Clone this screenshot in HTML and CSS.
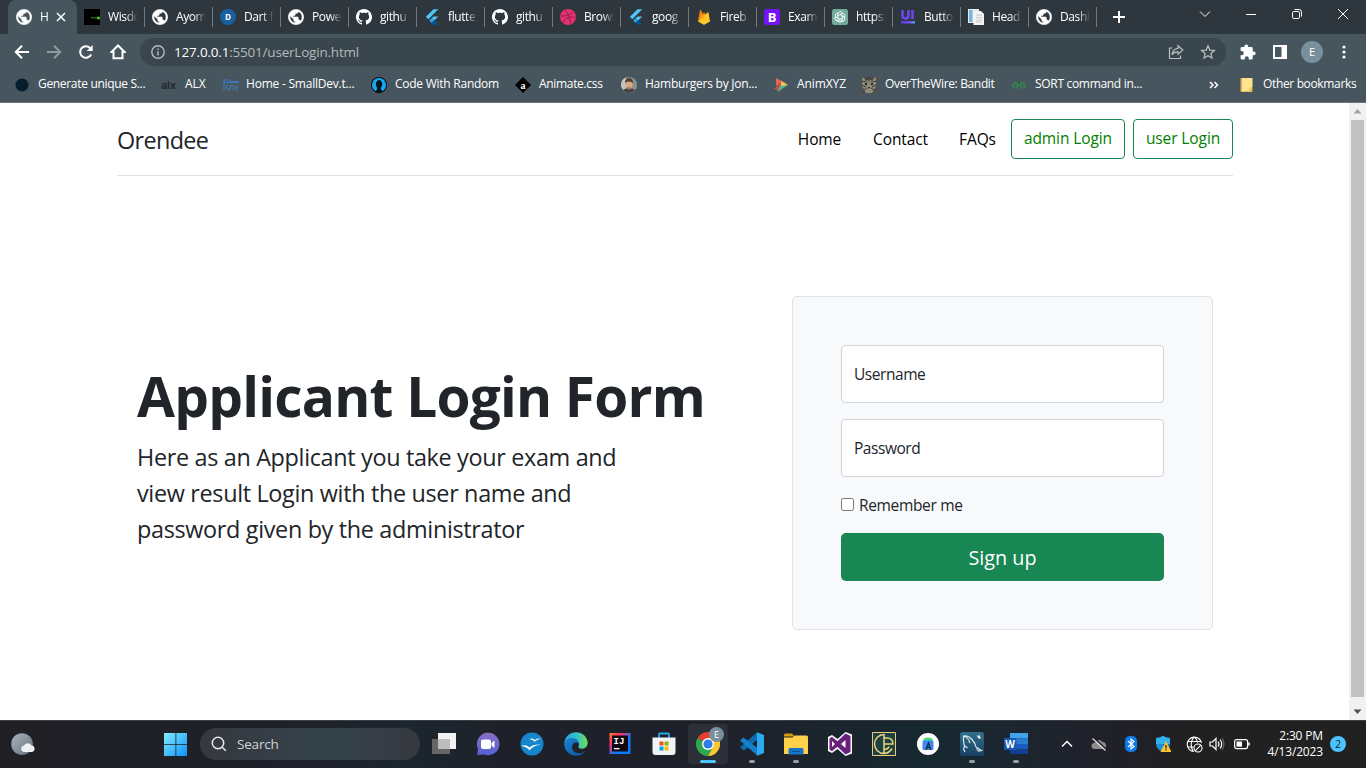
FILE: index.html
```html
<!DOCTYPE html>
<html lang="en">
<head>
<meta charset="utf-8">
<title>Applicant Login</title>
<link rel="stylesheet" href="styles.css">
</head>
<body>
<svg class="defs" width="0" height="0">
  <symbol id="globe" viewBox="1.500 1.500 21 21"><path fill="#fff" stroke="#fff" stroke-width=".8" d="M12 2C6.480 2 2 6.480 2 12s4.480 10 10 10 10-4.480 10-10S17.520 2 12 2zm-1 17.930c-3.950-.49-7-3.850-7-7.930 0-.62.08-1.210.21-1.790L9 15v1c0 1.100.9 2 2 2v1.930zm6.900-2.540c-.26-.81-1-1.390-1.900-1.390h-1v-3c0-.55-.45-1-1-1H8v-2h2c.55 0 1-.45 1-1V7h2c1.100 0 2-.9 2-2v-.41c2.930 1.190 5 4.060 5 7.410 0 2.080-.8 3.970-2.100 5.390z"/></symbol>
  <symbol id="github" viewBox="0 0 16 16"><path fill="#fff" d="M8 0C3.580 0 0 3.580 0 8c0 3.540 2.290 6.530 5.470 7.590.4.070.55-.17.55-.38 0-.19-.01-.82-.01-1.490-2.010.37-2.530-.49-2.690-.94-.09-.23-.48-.94-.82-1.130-.28-.15-.68-.52-.01-.53.63-.01 1.080.58 1.230.82.72 1.210 1.870.87 2.330.66.070-.52.28-.87.51-1.070-1.780-.2-3.640-.89-3.640-3.950 0-.87.31-1.590.82-2.150-.08-.2-.36-1.020.08-2.120 0 0 .67-.21 2.200.82.64-.18 1.320-.27 2-.27s1.360.09 2 .27c1.530-1.040 2.200-.82 2.200-.82.44 1.100.16 1.920.08 2.120.51.56.82 1.270.82 2.150 0 3.070-1.870 3.750-3.650 3.950.29.25.54.73.54 1.480 0 1.070-.01 1.930-.01 2.200 0 .21.15.46.55.38A8 8 0 0 0 8 0z"/></symbol>
  <symbol id="flutter" viewBox="0 0 16 16"><path fill="#54c5f8" d="M9.500.3h4.800L4.300 10.200 1.900 7.800z"/><path fill="#54c5f8" d="M9.500 7.500h4.800L10.200 11.500 7.700 9.200z"/><path fill="#29a0e8" d="M5.200 11.500l2.500-2.400 2.500 2.400-2.500 2.500z"/><path fill="#01579b" d="M7.700 14l2.500-2.500 4.100 4.200H9.500z"/></symbol>
</svg>

<div class="screen">
  <header class="tabs">
    <div class="tab active"><svg class="ico"><use href="#globe"/></svg><span class="t">H</span><svg class="x" viewBox="0 0 10 10"><path d="M1 1l8 8M9 1l-8 8"/></svg></div>
    <div class="tab"><svg class="ico" viewBox="0 0 16 16"><path d="M0 0h16v16H0z"/><path d="M7 8.500l3 .5 6-.5" stroke="#3a8a20" stroke-width="1.200" fill="none"/><circle cx="14.500" cy="9" r="1.500" fill="#4fd02c"/></svg><span class="t">Wisdo</span></div>
    <div class="tab"><svg class="ico"><use href="#globe"/></svg><span class="t">Ayom</span></div>
    <div class="tab"><svg class="ico" viewBox="0 0 16 16"><circle cx="8" cy="8" r="8" fill="#1a5f9e"/><text x="8" y="11" text-anchor="middle" class="d">D</text></svg><span class="t">Dart f</span></div>
    <div class="tab"><svg class="ico"><use href="#globe"/></svg><span class="t">Powe</span></div>
    <div class="tab"><svg class="ico"><use href="#github"/></svg><span class="t">githu</span></div>
    <div class="tab"><svg class="ico"><use href="#flutter"/></svg><span class="t">flutte</span></div>
    <div class="tab"><svg class="ico"><use href="#github"/></svg><span class="t">githu</span></div>
    <div class="tab"><svg class="ico" viewBox="0 0 16 16"><circle cx="8" cy="8" r="8" fill="#e2326f"/><g fill="none" stroke="#94204b" stroke-width="1"><path d="M5 1c3 4 5 8 5.800 13.800M.6 7c5 .3 9-.8 12.200-4M3 13.800C5 9 9.500 7 15.400 8.500"/></g></svg><span class="t">Brows</span></div>
    <div class="tab"><svg class="ico"><use href="#flutter"/></svg><span class="t">goog</span></div>
    <div class="tab"><svg class="ico" viewBox="0 0 16 16"><path fill="#f5820d" d="M2 12L4 1.200c.1-.5.7-.6.9-.1L7 5l1-2 6 9z"/><path fill="#ffca28" d="M2 12.500l9.500-9c.4-.4.900-.2 1 .3L14 12.500l-5.300 3c-.5.300-1 .3-1.400 0z"/><path fill="#ffa712" d="M2 12.500L7 4.800l2 3.500z"/></svg><span class="t">Fireb</span></div>
    <div class="tab"><svg class="ico" viewBox="0 0 16 16"><rect width="16" height="16" rx="2.500" fill="#7413f5"/><text x="8" y="12.600" text-anchor="middle" class="b">B</text></svg><span class="t">Exam</span></div>
    <div class="tab"><svg class="ico" viewBox="0 0 16 16"><rect width="16" height="16" rx="2.500" fill="#74aa9c"/><g fill="none" stroke="#fff" stroke-width=".9"><g id="lp"><path d="M5.800 9.300V5.200c0-3 4.300-3.300 4.800-.8M5.800 6.800l3.400-2c2.500-1.200 4.700 1.600 3 3.600"/></g><use href="#lp" transform="rotate(120 8 8)"/><use href="#lp" transform="rotate(240 8 8)"/></g></svg><span class="t">https:</span></div>
    <div class="tab"><svg class="ico" viewBox="0 0 16 16"><defs><linearGradient id="ui"><stop stop-color="#5a3df5"/><stop offset=".6" stop-color="#7a4df8"/><stop offset="1" stop-color="#38b6ff"/></linearGradient></defs><path d="M2.500 1v5.500q0 3 3 3t3-3V1M12.500 1v9" fill="none" stroke="#6f45f2" stroke-width="2.600"/><path d="M1 12.200h14v2.300H1z" fill="url(#ui)"/></svg><span class="t">Butto</span></div>
    <div class="tab"><svg class="ico" viewBox="0 0 16 16"><path d="M0 0h11v14H0z" fill="#e3edf5"/><path d="M1 1h3.500v12H1z" fill="#78b4df"/><path d="M5.500 2H13l3 3v11H5.500z" fill="#f4f4f4"/><path d="M8 6h6M8 8.500h6M8 11h6M8 13h6" stroke="#b9bcc0" stroke-width=".8"/></svg><span class="t">Head</span></div>
    <div class="tab"><svg class="ico"><use href="#globe"/></svg><span class="t">Dashl</span></div>
    <svg class="plus" viewBox="0 0 12 12"><path d="M6 0v12M0 6h12"/></svg>
    <div class="winbtns">
      <svg viewBox="0 0 12 12"><path d="M1 3.500l5 5 5-5"/></svg>
      <svg viewBox="0 0 12 12"><path d="M1 6.500h10"/></svg>
      <svg viewBox="0 0 12 12"><rect x="1.500" y="3.500" width="7" height="7" rx="1.300"/><path d="M3.500 1.500h4.500q2.500 0 2.500 2.500v4.500"/></svg>
      <svg viewBox="0 0 12 12"><path d="M1 1l10 10M11 1L1 11"/></svg>
    </div>
  </header>

  <div class="toolbar">
    <div class="nav"><svg viewBox="0 0 16 16"><path d="M15 8H2M8 1.800L1.800 8 8 14.200"/></svg></div>
    <div class="nav dim"><svg viewBox="0 0 16 16"><path d="M1 8h13M8 1.800L14.200 8 8 14.200"/></svg></div>
    <div class="nav"><svg viewBox="0 0 16 16"><path d="M13.200 10.500A5.800 5.800 0 1 1 12.500 4.300"/><path class="f" d="M14.700 1v6h-6z"/></svg></div>
    <div class="nav"><svg viewBox="0 0 16 16"><path d="M8 1.500L1.500 8H3.500v6.300h9V8h2z"/></svg></div>
    <div class="omni">
      <svg class="info" viewBox="0 0 14 14"><circle cx="7" cy="7" r="6.200"/><path d="M7 6.200v4.300M7 3.500v1.500"/></svg>
      <span class="url"><b>127.0.0.1</b>:5501/userLogin.html</span>
      <svg class="oi" viewBox="0 0 16 16"><path d="M4.500 4H1.500v10.500h11v-3M10 1.800l4.800 4.200L10 10.200V7.800q-4-.2-6 3 .5-5.800 6-6.500z"/></svg>
      <svg class="oi" viewBox="0 0 16 16"><path d="M8 1.800l1.800 4.300 4.600.4-3.500 3 1.100 4.600L8 11.700l-4 2.400 1.100-4.600-3.500-3 4.600-.4z"/></svg>
    </div>
    <div class="ext">
      <svg viewBox="0 0 16 16"><path fill="#fff" d="M13.800 7.500h-1.100V4.300c0-.8-.6-1.400-1.400-1.400H8.200V2.400a1.900 1.900 0 0 0-3.800 0v.5H1.900C1.100 2.900.6 3.500.6 4.300v2.800h1.100a2 2 0 0 1 0 4.100H.6V14c0 .8.600 1.400 1.300 1.400h2.900v-1.100a2 2 0 0 1 4 0v1.100h2.500c.8 0 1.400-.6 1.400-1.400v-2.800h1.100a1.850 1.850 0 0 0 0-3.700z"/></svg>
      <svg viewBox="0 0 16 16"><path fill="none" stroke="#fff" stroke-width="2" d="M2 2h12v12H2z"/><path fill="#fff" d="M9.500 1H15v14H9.500z"/></svg>
      <span class="avatar">E</span>
      <svg viewBox="0 0 16 16"><g fill="#fff"><circle cx="8" cy="3" r="1.600"/><circle cx="8" cy="8" r="1.600"/><circle cx="8" cy="13" r="1.600"/></g></svg>
    </div>
  </div>

  <div class="bookmarks">
    <div class="bm"><svg class="ico" viewBox="0 0 16 16"><circle cx="8" cy="8" r="6.500" fill="#051d2d"/></svg><span class="m1">Generate unique S...</span></div>
    <div class="bm"><svg class="ico" viewBox="0 0 16 16"><text x="0" y="11.500" class="alx" textLength="15" lengthAdjust="spacingAndGlyphs">alx</text></svg><span class="m2">ALX</span></div>
    <div class="bm"><svg class="ico" viewBox="0 0 16 16"><path d="M1 14V3h5l1.500 1.500H15v2M1 5.500h14M13.500 8v6" stroke="#3c78bd" fill="none" stroke-width="1.200"/><path d="M5 8L2.800 10.500 5 13M9.500 8l2.200 2.500L9.500 13M8 7.500l-1.500 6" stroke="#4a8cd6" fill="none"/></svg><span class="m3">Home - SmallDev.t...</span></div>
    <div class="bm"><svg class="ico" viewBox="0 0 16 16"><circle cx="8" cy="8" r="8" fill="#0b1115"/><circle cx="8" cy="8" r="7" fill="#12a9f5"/><path d="M3.800 14.500q3-1.500 2.200-4Q4.500 8.500 5 5.500 6 3 8.200 3t3 3q.3 3-1.200 4.500-.6 2.500 2 4Q8 17 3.800 14.500z" fill="#071219"/></svg><span class="m4">Code With Random</span></div>
    <div class="bm"><svg class="ico" viewBox="0 0 16 16"><path d="M8 0l8 8-8 8-8-8z"/><text x="8" y="11.500" text-anchor="middle" class="a">a</text></svg><span class="m5">Animate.css</span></div>
    <div class="bm"><svg class="ico" viewBox="0 0 16 16"><circle cx="8" cy="8" r="8" fill="#8c938a"/><path d="M0 8a8 8 0 0 1 5-7.500V14Q0 12 0 8z" fill="#c1c5bd"/><path d="M2 13q6-4 12 0-6 6-12 0z" fill="#413f42"/><ellipse cx="8" cy="7.500" rx="3.500" ry="4.800" fill="#d8a88b"/><path d="M4 6q0-5 4-5t4 5q-4-3-8 0z" fill="#574033"/><path d="M6 10q2 1 4 0l-2 4z" fill="#a96555"/></svg><span class="m6">Hamburgers by Jon...</span></div>
    <div class="bm"><svg class="ico" viewBox="0 0 16 16"><path d="M3 1l10 5-5 4-5-2z" fill="#e26852"/><path d="M8 4l7 4-8 4z" fill="#f1c65b"/><path d="M1 12l7-8v10z" fill="#be4f57"/><path d="M4 15l3-6 8-1z" fill="#54b783"/></svg><span class="m7">AnimXYZ</span></div>
    <div class="bm"><svg class="ico" viewBox="0 0 16 16"><path d="M0 0h16v16H0z" fill="#514f47"/><path d="M1 0l4 3h6l4-3v9l-4 7H5L1 9z" fill="#8f8c7f"/><path d="M5 1v4M8 0v5M11 1v4M1 8l4 2M15 8l-4 2M3 13l3-2M13 13l-3-2M1 4l3 1M15 4l-3 1" stroke="#39372f"/><circle cx="5" cy="7" r="1.200" fill="#24231c"/><circle cx="11" cy="7" r="1.200" fill="#24231c"/><path d="M6.500 10h3L8 12z" fill="#403b36"/></svg><span class="m8">OverTheWire: Bandit</span></div>
    <div class="bm"><svg class="ico" viewBox="0 0 16 16"><path d="M1 8h14M2 6q4.500-2 4.800 2Q6.500 11.500 4 11 1.500 10.500 1.200 8M14 6q-4.500-2-4.800 2 .3 3.500 2.800 3 2.500-.5 2.800-3" stroke="#2f8d46" fill="none" stroke-width="1.200"/></svg><span class="m9">SORT command in...</span></div>
    <div class="bmr"><svg class="more" viewBox="0 0 10 8"><path d="M1 1l3 3-3 3M5.500 1l3 3-3 3"/></svg><i class="sep"></i><svg class="ico" viewBox="0 0 16 16"><path d="M2.500 1h11v9l-2 4.500h-9z" fill="#ffe38e"/><path d="M2 1v13.500h11V11h-2.500v3" fill="none" stroke="#eec048" stroke-width="1"/></svg><span class="m10">Other bookmarks</span></div>
  </div>

  <div class="view">
    <main class="page">
      <nav class="head">
        <span class="brand">Orendee</span>
        <a class="l1">Home</a><a class="l2">Contact</a><a class="l3">FAQs</a>
        <a class="btn b1">admin Login</a><a class="btn b2">user Login</a>
      </nav>
      <section class="hero">
        <div class="copy">
          <h1>Applicant Login Form</h1>
          <p>Here as an Applicant you take your exam and<br>view result Login with the user name and<br>password given by the administrator</p>
        </div>
        <form class="card">
          <div class="field">Username</div>
          <div class="field">Password</div>
          <label class="remember"><input type="checkbox"><span>Remember me</span></label>
          <button type="button">Sign up</button>
        </form>
      </section>
    </main>
    <div class="scroll"><svg viewBox="0 0 17 17"><path d="M4.500 10.500l4-4.500 4 4.500z" fill="#a3a3a3"/></svg><i></i><svg viewBox="0 0 17 17"><path d="M4.500 6.500l4 4.500 4-4.500z" fill="#505050"/></svg></div>
  </div>

  <footer class="task">
    <svg class="weather" viewBox="0 0 24 24"><defs><linearGradient id="mo" x2="1" y2="1"><stop stop-color="#a9b3bd"/><stop offset="1" stop-color="#68727c"/></linearGradient></defs><circle cx="11" cy="12" r="10.800" fill="url(#mo)"/><path d="M13 20a3.300 3.300 0 0 1 0-6.500 4.300 4.300 0 0 1 7.500 0A3.300 3.300 0 0 1 21 20z" fill="#eef1f4"/></svg>
    <svg class="start" viewBox="0 0 24 24"><defs><linearGradient id="wg" gradientUnits="userSpaceOnUse" x1="0" y1="0" x2="24" y2="24"><stop stop-color="#83f0ff"/><stop offset="1" stop-color="#0a90fb"/></linearGradient></defs><path d="M0 1h11.500v11H0zM12.300 1H23v11H12.300zM0 12.800h11.500V24H0zM12.300 12.800H23V24H12.300z" fill="url(#wg)"/></svg>
    <div class="search"><svg viewBox="0 0 16 16"><circle cx="7" cy="7" r="5.700"/><path d="M11.200 11.200l3.600 3.600"/></svg><span class="s1">Search</span></div>
    <div class="apps">
      <div><svg viewBox="0 0 24 24"><path d="M6 1h18v16H6z" fill="#f2f2f2"/><path d="M0 7h18v15H0z" fill="#666"/><path d="M6 7h12v10H6z" fill="#bdbdbd"/></svg></div>
      <div><svg viewBox="0 0 24 24"><defs><linearGradient id="ch" x2="0" y2="1"><stop stop-color="#8a6fc4"/><stop offset="1" stop-color="#5360d6"/></linearGradient></defs><path d="M1 23l1-6A11.300 11.300 0 1 1 8 22.500z" fill="url(#ch)"/><rect x="5" y="7.500" width="10" height="9.500" rx="2" fill="#fff"/><path d="M15.500 11l3-2.500v7.500l-3-2.500z" fill="#fff"/></svg></div>
      <div><svg viewBox="0 0 24 24"><circle cx="12" cy="12" r="11.500" fill="#1585cc"/><path d="M9 7q4-1.500 6 1 2-2.500 6-1-4 0-6 2.800Q13 7.500 9 7zM1 14q5-2 8.500 1.500Q13 12 21 12.500q-8 1-11.500 6Q7 14.500 1 14z" fill="#fff"/></svg></div>
      <div><svg viewBox="0 0 24 24"><defs><linearGradient id="e1" x2="1"><stop stop-color="#27a9e3"/><stop offset=".55" stop-color="#35c1c9"/><stop offset="1" stop-color="#6ee04e"/></linearGradient><linearGradient id="e2" x2="1" y2="1"><stop stop-color="#1b86d8"/><stop offset="1" stop-color="#0c4f92"/></linearGradient></defs><path d="M.3 11C.8 5 5.800.3 12 .3S23.700 5 23.700 11c0 3.500-2.800 5.700-5.700 5.700-3 0-4-1.300-3.500-2.200 1-1.500.8-5.500-4-6.500-4.500-.5-8 .5-10.200 3z" fill="url(#e1)"/><path d="M.3 11.500C1 7.500 5 5.800 8.500 6c5 .2 6.500 4 6.300 5.500C12 9 8 11 8 15c0 4 4.500 7 9 6 2-.4 3-1.200 4.500-2C19 22.500 15.500 23.700 12 23.700 5 23.700 0 18 .3 11.500z" fill="url(#e2)"/></svg></div>
      <div><svg viewBox="0 0 24 24"><defs><linearGradient id="ij" x2="1" y2="1"><stop stop-color="#fc801d"/><stop offset=".3" stop-color="#fe2f70"/><stop offset=".6" stop-color="#087cfa"/><stop offset="1" stop-color="#087cfa"/></linearGradient></defs><path d="M1.500 1h21v21h-21z" fill="url(#ij)"/><path d="M4 3.500h16v16H4z" fill="#120812"/><text x="5.500" y="12" class="ij">IJ</text><path d="M6 16h5.500v1.300H6z" fill="#fff"/></svg></div>
      <div><svg viewBox="0 0 24 24"><path d="M7 7V2.500q0-1 1-1h8q1 0 1 1V7" fill="none" stroke="#29a7ea" stroke-width="1.800"/><path d="M.5 5.500h23V20q0 3-3 3h-17q-3 0-3-3z" fill="#f2f3f4"/><path d="M7.500 9.500h4v4h-4z" fill="#f1511b"/><path d="M12.500 9.500h4v4h-4z" fill="#80bb08"/><path d="M7.500 14.500h4v4h-4z" fill="#00a3ee"/><path d="M12.500 14.500h4v4h-4z" fill="#fbb90a"/></svg></div>
      <div class="on cur"><svg viewBox="0 0 24 24"><path d="M12 12L1.600 6A12 12 0 0 1 22.400 6z" fill="#e53c31"/><path d="M12 12L1.600 6A12 12 0 0 0 12 24l5-9z" fill="#2da84f"/><path d="M12 6h10.400A12 12 0 0 1 12 24l5-9z" fill="#fdc72f"/><circle cx="12" cy="12" r="6" fill="#fff"/><circle cx="12" cy="12" r="4.600" fill="#2f7de9"/></svg><span class="mini">E</span></div>
      <div class="on"><svg viewBox="0 0 24 24"><path d="M17 .3V8L4 18.500 0 15.500z" fill="#0d6cb0"/><path d="M0 8.500L3.500 5.500 17.500 16v7.700z" fill="#1480cc"/><path d="M17 .3L24 3v18l-7 2.800z" fill="#2ba9f3"/></svg></div>
      <div class="on"><svg viewBox="0 0 24 24"><path d="M0 3q0-1.500 1.500-1.500H8l2.500 3H0z" fill="#dc9a10"/><path d="M0 5.500h8.500l2-2H22.500Q24 3.500 24 5v17H0z" fill="#ffd04a"/><path d="M4.500 22.500v-5q0-1.500 1.500-1.500h12q1.500 0 1.500 1.500v5z" fill="#1674c6"/><path d="M8 19.500h8" stroke="#0d4f8e"/></svg></div>
      <div><svg viewBox="0 0 24 24"><path d="M17.500 0L24 2.500v19L17.500 24l-8-7L4 21 0 19V5l4-2 5.500 4z" fill="#fff"/><path fill-rule="evenodd" d="M17.500 1.500L22.500 4v16l-5 2.500L9.500 14.800 4 19l-2.500-1.200V6.200L4 5l5.500 4.200zM17.500 8L13 12l4.500 4zM4 9v6l3-3z" fill="#68217a"/></svg></div>
      <div><svg viewBox="0 0 24 24"><path d="M.5.500h23v23H.5z" fill="#1e4146" stroke="#e8cf76"/><path d="M12 2v20M12.500 12H21q0-6-6-6h-3M12 2.500A9.500 9.500 0 1 0 12 21.500q5 0 8-5M12 17.500q4 0 5-3" fill="none" stroke="#ebd278" stroke-width="1.500"/></svg></div>
      <div><svg viewBox="0 0 24 24"><circle cx="12" cy="12" r="11" fill="#fff"/><path d="M7 9.500q0-4 5-4t5 4z" fill="#3ddc84"/><rect x="6.500" y="8.500" width="11" height="9.500" rx="1.500" fill="#4285f4"/><path d="M10 18l2.500-7 2.500 7M10.800 15.500h3.400" fill="none" stroke="#073042" stroke-width="1.300"/></svg></div>
      <div class="on"><svg viewBox="0 0 24 24"><defs><linearGradient id="my" x2="0" y2="1"><stop stop-color="#31708c"/><stop offset="1" stop-color="#173f61"/></linearGradient></defs><rect width="24" height="24" rx="2.500" fill="url(#my)"/><path d="M5 20l-1.500-3 1-2.500Q3 8 3.500 4 8 3 12 7.500q3.500 4 4 7.500l5.500 3.500-3 .5-2-2.500M5 14l2.500 2M4 4.500Q8 5 10 11" fill="none" stroke="#dbe6ec" stroke-width="1.200"/><path d="M16 2.500l2 2 1-2 2 4-2.500 0z" fill="#fff"/></svg></div>
      <div class="on"><svg viewBox="0 0 24 24"><path d="M6 1h18v5.500H6z" fill="#41a5ee"/><path d="M6 6.500h18V12H6z" fill="#2b7cd3"/><path d="M6 12h18v5.500H6z" fill="#185abd"/><path d="M6 17.500h18V22H6z" fill="#103f91"/><rect x="0" y="6" width="12.500" height="12" rx="1" fill="#1c58b8"/><text x="6.200" y="15.500" text-anchor="middle" class="w">W</text></svg></div>
    </div>
    <div class="tray">
      <svg viewBox="0 0 16 16"><path d="M3 10.500l5-5 5 5" fill="none" stroke="#fff" stroke-width="1.500"/></svg>
      <svg viewBox="0 0 16 16"><path d="M3.500 13a3 3 0 0 1 0-6 4.500 4.500 0 0 1 8-1A3.700 3.700 0 0 1 13 13z" fill="#8d8d8d"/><path d="M2.500 1.500l13 12" stroke="#202125" stroke-width="1.500"/><path d="M1.500 2.500l13 12" stroke="#ddd" stroke-width="1.200"/></svg>
      <svg viewBox="0 0 16 16"><rect x="2" y="0" width="12" height="16" rx="5" fill="#0a7cf0"/><path d="M5 5l6 5.500L8 13V3l3 2.500L5 11" fill="none" stroke="#fff" stroke-width="1.200"/></svg>
      <svg viewBox="0 0 16 16"><path d="M8 0q3 2 7 2v6q0 5-7 8-7-3-7-8V2q4 0 7-2z" fill="#1b92dd"/><path d="M8 0q3 2 7 2v6H1V2q4 0 7-2z" fill="#31b1ee"/><path d="M8 8h7q0 5-7 8z" fill="#0d67b3"/><path d="M11 5l5.500 11H5.500z" fill="#ffc52e"/><path d="M11 9v3.500M11 13.300v1.200" stroke="#222" stroke-width="1.300"/></svg>
      <svg class="wide" viewBox="0 0 17 17"><g fill="none" stroke="#fff" stroke-width="1.100"><path d="M15.500 7A7.200 7.200 0 1 0 8 15.500M1.500 5.500h13M1.500 11h6M8 1Q3 7 7 15.500M8.500 1q2.500 2 3 5.500"/><circle cx="12" cy="12" r="4"/><path d="M9.200 14.800l5.600-5.600"/></g></svg>
      <svg viewBox="0 0 16 16"><path d="M1 6h2.500L7 2.500v11L3.500 10H1z" fill="none" stroke="#fff" stroke-width="1.200"/><path d="M9 5.500q2 2.500 0 5M11 3.500q3.500 4.500 0 9" fill="none" stroke="#fff" stroke-width="1.200"/><path d="M13 2q4 6 0 12" fill="none" stroke="#666" stroke-width="1.200"/></svg>
      <svg viewBox="0 0 16 16"><rect x=".6" y="3.600" width="13" height="9" rx="2" fill="none" stroke="#fff" stroke-width="1.200"/><path d="M2.500 5.500h5.500v5.200H2.500z" fill="#fff"/><path d="M15 6.500v3" stroke="#fff" stroke-width="1.600"/></svg>
      <div class="clock"><span>2:30 PM</span><br><span>4/13/2023</span></div>
      <span class="badge">2</span>
    </div>
  </footer>
</div>
</body>
</html>
```
FILE: styles.css
```css
* { box-sizing: border-box; }
body { margin: 0; font-family: "Open Sans", "Noto Sans", sans-serif; overflow: hidden; }
.defs { position: absolute; }
svg { display: block; flex: none; }
.screen { width: 1366px; height: 768px; display: flex; flex-direction: column; background: #fff; }

.tabs { height: 34px; flex: none; display: flex; padding-left: 8px; background: #2e373d; color: #fff; font-size: 12px; }
.tab { width: 68px; height: 34px; display: flex; align-items: center; padding-left: 7px; flex: none; background: linear-gradient(#74797d, #74797d) right 0 top 7px / 1px 20px no-repeat; }
.tab .t { margin-left: 8px; width: 34px; margin-top: -2px; white-space: nowrap; letter-spacing: -0.4px; -webkit-mask-image: linear-gradient(90deg, #000 18px, transparent 30px); mask-image: linear-gradient(90deg, #000 18px, transparent 30px); }
.tab.active { width: 69px; padding-left: 8px; background: #46555e; border-radius: 8px 8px 0 0; }
.tab.active .t { width: 9px; }
.x { width: 10px; height: 10px; margin-left: 7px; }
.x path { stroke: #fff; stroke-width: 1.5; }
.ico { width: 16px; height: 16px; }
.d { font: bold 8px "Open Sans", sans-serif; fill: #fff; }
.b { font: bold 13px "Open Sans", sans-serif; fill: #fff; }
.a { font: bold 10px "Liberation Serif", serif; fill: #fff; }
.alx { font: bold 10px "Inter", sans-serif; fill: #20282d; }
.w { font: bold 10px "Open Sans", sans-serif; fill: #fff; }
.ij { font: bold 9px "Liberation Mono", monospace; fill: #fff; }
.plus { width: 12px; height: 12px; margin: 11px 0 0 16px; }
.plus path { stroke: #fff; stroke-width: 2; }
.winbtns { margin-left: auto; display: flex; height: 28px; align-items: center; }
.winbtns svg { width: 12px; height: 12px; margin: 0 17px; }
.winbtns path, .winbtns rect { fill: none; stroke: #fff; stroke-width: 1; }

.toolbar { height: 36px; flex: none; background: #46555e; display: flex; align-items: center; padding-left: 6px; }
.nav { width: 32px; display: flex; justify-content: center; }
.nav svg { width: 16px; height: 16px; }
.nav path { fill: none; stroke: #fff; stroke-width: 2; }
.nav .f { fill: #fff; stroke: none; }
.nav.dim path { stroke: #8f999e; }
.omni { width: 1086px; height: 28px; margin-left: 6px; border-radius: 14px; background: #39464d; display: flex; align-items: center; padding: 0 10px 0 11px; }
.info { width: 14px; height: 14px; }
.info circle, .info path { fill: none; stroke: #b5bbbe; stroke-width: 1.4; }
.url { margin-left: 9px; margin-right: auto; font-size: 13.5px; letter-spacing: -0.2px; color: #b3b9bc; }
.url b { font-weight: 400; color: #fff; }
.oi { width: 16px; height: 16px; margin-left: 16px; }
.oi path { fill: none; stroke: #b9bfc2; stroke-width: 1.2; }
.ext { display: flex; align-items: center; gap: 16px; margin-left: 14px; }
.ext svg { width: 16px; height: 16px; }
.avatar { width: 22px; height: 22px; margin: 0 -3px; border-radius: 50%; background: #78909c; color: #fff; font-size: 11px; line-height: 22px; text-align: center; }

.bookmarks { height: 33px; flex: none; background: #46555e; border-bottom: 1px solid #6a777e; padding: 0 0 3px 14px; color: #fff; font-size: 12px; white-space: nowrap; display: grid; align-items: center; grid-template-columns: 147px 62px 148px 144px 106px 152px 88px 150px 198px 147px; }
.bm, .bmr { display: flex; align-items: center; gap: 8px; }
.bm span, .bmr span { margin-top: -2px; }
.bmr { gap: 0; }
.m1 { letter-spacing: -0.32px; }
.m3 { letter-spacing: -0.22px; margin-left: -1px; }
.m4 { letter-spacing: -0.25px; }
.m5 { letter-spacing: -0.32px; }
.m6 { letter-spacing: -0.24px; }
.m7 { letter-spacing: -0.1px; }
.m8 { letter-spacing: -0.35px; }
.m9 { letter-spacing: -0.31px; }
.m10 { letter-spacing: -0.35px; }
.more { width: 10px; height: 8px; }
.more path { fill: none; stroke: #fff; stroke-width: 1.5; }
.sep { width: 1px; height: 16px; background: #76838a; margin: 0 10px; }
.bmr .m10 { margin-left: 8px; }

.view { flex: 1; display: flex; min-height: 0; }
.page { width: 1349px; padding: 0 116px 0 117px; color: #212529; font-size: 15.5px; line-height: 24px; }
.head { height: 73px; border-bottom: 1px solid #dee2e6; padding: 16px 0; display: flex; align-items: center; color: #000; letter-spacing: -0.1px; }
.brand { font-size: 23.4px; line-height: 36px; letter-spacing: -0.65px; margin-right: auto; padding-top: 1px; color: #212529; }
.l1 { width: 75px; text-align: center; }
.l2 { width: 87px; text-align: center; }
.l3 { width: 67px; text-align: center; }
.btn { height: 40px; border: 1px solid #198754; border-radius: 4px; color: green; text-align: center; line-height: 37px; }
.b1 { width: 114px; }
.b2 { width: 100px; margin-left: 8px; }
.hero { display: flex; align-items: center; padding: 120px 20px 0; }
.copy { width: 655px; }
h1 { margin: -2px 0 10px; font-size: 55px; line-height: 67px; font-weight: 700; letter-spacing: -0.78px; white-space: nowrap; }
.copy p { margin: 0 0 16px; font-size: 23.4px; line-height: 36px; letter-spacing: -0.33px; white-space: nowrap; }
.card { width: 421px; height: 334px; background: #f8f9fa; border: 1px solid #dee2e6; border-radius: 5px; padding: 48px; display: flex; flex-direction: column; gap: 16px; }
.field { height: 58px; border: 1px solid #ced4da; border-radius: 4px; background: #fff; padding: 16px 12px; letter-spacing: -0.45px; }
.remember { display: flex; align-items: center; height: 24px; gap: 5px; letter-spacing: -0.34px; }
.remember input { width: 13px; height: 13px; margin: 0 0 2px; }
.card button { height: 48px; border: 0; border-radius: 5px; background: #198754; color: #fff; font: 19.8px/30px "Open Sans", sans-serif; padding: 2px 0 0; }
.scroll { width: 17px; background: #f1f1f1; display: flex; flex-direction: column; align-items: center; }
.scroll i { flex: 1; width: 13px; background: #c1c1c1; margin: 0 0 6px; }
.scroll svg { width: 17px; height: 17px; }

.task { height: 48px; flex: none; border-top: 1px solid #3c3e44; background: linear-gradient(90deg, #202025, #1f2028 12%, #1e222b 24%, #1b262e 30%, #1f212a 37%, #1f212a 52%, #172830 68%, #1b2630 74%, #20212a 80%, #212121 88%); display: flex; align-items: center; color: #fff; padding: 0 0 1px 11px; }
.weather { width: 24px; height: 24px; }
.start { width: 24px; height: 24px; margin-left: 129px; }
.search { width: 220px; height: 32px; margin-left: 12px; border-radius: 16px; background: linear-gradient(90deg, #36383f, #34434a 60%, #363840); display: flex; align-items: center; padding-left: 11px; font-size: 13.5px; letter-spacing: -0.2px; color: #d2d4d6; }
.search svg { width: 16px; height: 16px; margin-right: 10px; }
.search circle, .search path { fill: none; stroke: #e8e8e8; stroke-width: 1.5; }
.apps { display: flex; margin-left: 2px; }
.apps div { width: 44px; height: 46px; display: flex; align-items: center; justify-content: center; position: relative; }
.apps svg { width: 24px; height: 24px; position: relative; }
.apps .on::after { content: ""; position: absolute; width: 6px; height: 3px; border-radius: 2px; background: #9a9da0; bottom: 4px; left: 19px; }
.apps .cur::after { width: 16px; left: 14px; background: #4cc2ff; }
.apps .cur::before { content: ""; position: absolute; inset: 3px 2px; border-radius: 4px; background: #2c2f37; }
.mini { position: absolute; left: 23px; top: 6px; width: 15px; height: 15px; border-radius: 50%; background: #78909c; font-size: 9px; line-height: 15px; text-align: center; }
.tray { display: flex; align-items: center; margin-left: 21px; }
.tray svg { width: 16px; height: 16px; margin-right: 16px; }
.tray .wide { width: 17px; height: 17px; margin-right: 6px; margin-left: -1px; }
.tray .wide + svg { margin-right: 9px; }
.tray .wide + svg + svg { margin-right: 0; }
.clock { width: 73px; text-align: right; font-size: 12px; letter-spacing: -0.15px; line-height: 16px; white-space: nowrap; }
.badge { width: 16px; height: 16px; border-radius: 50%; background: #4cc2ff; color: #10202a; font-size: 10px; line-height: 16px; text-align: center; margin-left: 7px; }
```
